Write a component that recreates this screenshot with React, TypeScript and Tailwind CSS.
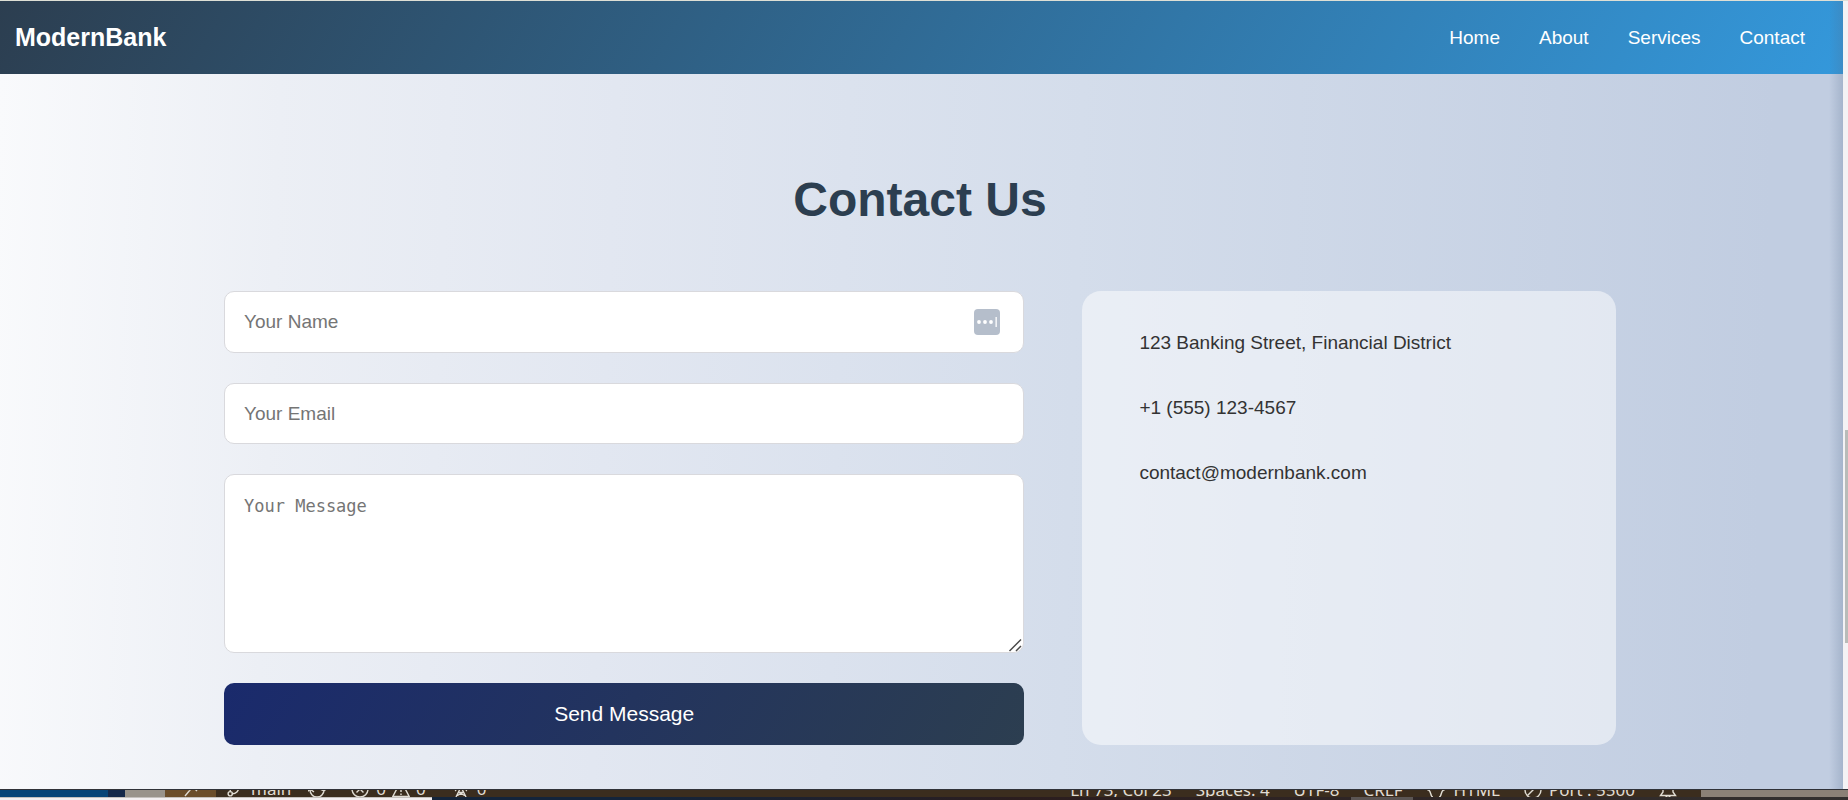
import type { ReactNode } from "react";
import { GitBranch } from "lucide-react";

const links = ["Home", "About", "Services", "Contact"];

function Header() {
  return (
    <header className="flex h-[73px] shrink-0 items-center justify-between bg-[linear-gradient(120deg,#2c3e50,#3498db)] pr-[38px] pl-[15px] text-white">
      <a href="#home" className="text-[25px] font-bold">ModernBank</a>
      <nav className="flex gap-[39px] pt-[2px] text-[19px]">
        {links.map((link) => (
          <a key={link} href={"#" + link.toLowerCase()}>{link}</a>
        ))}
      </nav>
    </header>
  );
}

const fieldClass =
  "block w-full rounded-[10px] border border-[#d9d9dd] bg-white px-[19px] text-[19px] text-[#333333] placeholder:text-[#757575] outline-none";

function ContactForm() {
  return (
    <form className="flex flex-col gap-[30px]" onSubmit={(e) => e.preventDefault()}>
      <div className="relative">
        <input aria-label="Your Name" type="text" placeholder="Your Name" className={fieldClass + " h-[62px]"} />
        <svg aria-hidden="true" viewBox="0 0 26 26" className="absolute top-[18px] right-[24px] size-[26px]">
          <rect width="26" height="26" rx="4" fill="#b5becb" />
          <circle cx="5" cy="13" r="1.9" fill="white" />
          <circle cx="11" cy="13" r="1.9" fill="white" />
          <circle cx="17" cy="13" r="1.9" fill="white" />
          <rect x="21.5" y="8" width="1.3" height="10" fill="white" />
        </svg>
      </div>
      <input aria-label="Your Email" type="email" placeholder="Your Email" className={fieldClass + " h-[61px]"} />
      <div className="relative">
        <textarea
          aria-label="Your Message"
          placeholder="Your Message"
          className="block h-[179px] w-full resize-none rounded-[10px] border border-[#d9d9dd] bg-white px-[19px] py-[19px] font-['DejaVu_Sans_Mono',monospace] text-[17px] text-[#333333] outline-none placeholder:text-[#757575]"
        />
        <svg aria-hidden="true" viewBox="0 0 14 14" fill="none" stroke="#4a4a4a" strokeWidth="1.5" className="absolute right-[2px] bottom-[1px] size-[14px]">
          <path d="M1.5 13 13 1.5M8 13l5-5" />
        </svg>
      </div>
      <button type="submit" className="h-[62px] rounded-[10px] bg-[linear-gradient(120deg,#1a2a6c,#2c3e50)] text-[21px] text-white">
        Send Message
      </button>
    </form>
  );
}

function StatusIcon({ children }: { children: ReactNode }) {
  return (
    <svg aria-hidden="true" viewBox="0 0 18 18" fill="none" stroke="currentColor" strokeWidth="1.4" className="size-[18px] shrink-0">
      {children}
    </svg>
  );
}

function StatusBar() {
  return (
    <footer className="h-[11px] shrink-0 overflow-hidden bg-[linear-gradient(90deg,#14243a_0%,#14243a_35%,#2b1d1e_55%,#33302f_100%)] font-['Noto_Sans',sans-serif] text-[17px] leading-[20px] text-[#e0dcd3]">
      <div className="flex h-[8px] items-end overflow-hidden border-t border-[#303238] bg-[#3b2d1e]">
        <div className="h-full w-[108px] shrink-0 bg-[#074477]" />
        <div className="h-full w-[17px] shrink-0 bg-[#15284a]" />
        <div className="h-full w-[40px] shrink-0 bg-[#99938b]" />
        <div className="flex h-full w-[51px] shrink-0 items-end justify-center bg-[#6b4d2a]">
          <StatusIcon>
            <path d="m3 6 5 5-5 6M15 2l-5 5 5 5" />
          </StatusIcon>
        </div>
        <div className="flex h-[16px] shrink-0 items-center pl-[10px]">
          <GitBranch size={17} />
          <span className="ml-[8px]">main</span>
          <span className="ml-[17px]">
            <StatusIcon>
              <path d="M2 8a7 7 0 0 1 14-1M16 10a7 7 0 0 1-14 0M-1 12l3-3 4 3M12 9l4 2 3-3" />
            </StatusIcon>
          </span>
          <span className="ml-[25px]">
            <StatusIcon>
              <circle cx="9" cy="9" r="8" />
              <path d="m5.5 5.5 7 7M12.5 5.5l-7 7" />
            </StatusIcon>
          </span>
          <span className="ml-[7px]">0</span>
          <span className="ml-[6px]">
            <StatusIcon>
              <path d="M9 1 17.2 16.5H.8ZM9 6v6M9 13.5V15" />
            </StatusIcon>
          </span>
          <span className="ml-[6px]">0</span>
          <span className="ml-[26px]">
            <StatusIcon>
              <path d="m9 7-5 10M9 7l5 10M6 12.5h6M5.5 15.5l5-3M12.5 15.5l-5-3M4 11a6 6 0 1 1 10 0" />
            </StatusIcon>
          </span>
          <span className="ml-[7px]">0</span>
        </div>
        <div className="ml-auto flex h-[15px] shrink-0 items-center gap-[24px] pr-[24px]">
          <span>Ln 73, Col 23</span>
          <span>Spaces: 4</span>
          <span>UTF-8</span>
          <span>CRLF</span>
          <span className="flex items-center gap-[9px]">
            <StatusIcon>
              <path d="M6 2C3 2 4.500 8 1.500 9 4.500 10 3 16 6 16M12 2c3 0 1.500 6 4.500 7-3 1-1.500 7-4.500 7" />
            </StatusIcon>
            HTML
          </span>
          <span className="flex items-center gap-[7px]">
            <StatusIcon>
              <circle cx="9" cy="9" r="8" />
              <path d="M14.500 3.500 3.500 14.500" />
            </StatusIcon>
            Port : 5500
          </span>
          <StatusIcon>
            <path d="M4 11V7a5 5 0 0 1 10 0v4l2.500 3.500h-15ZM7 14.500a2 2 0 0 0 4 0" />
          </StatusIcon>
        </div>
        <div className="h-full w-[147px] shrink-0 bg-[#8b8177]" />
      </div>
      <div className="flex">
        <div className="h-[3px] w-[432px] border-t border-[#c4c0bd] bg-[#f3eff1]" />
        <div className="ml-[919px] h-[3px] w-[62px] bg-[#5b5553]" />
      </div>
    </footer>
  );
}

export default function App() {
  return (
    <div className="flex min-h-screen flex-col font-['Liberation_Sans',Arial,sans-serif]">
      <div className="flex grow border-t border-[#dedfd5]">
        <div className="relative flex min-w-0 grow flex-col">
          <Header />
          <main className="grow bg-[linear-gradient(92deg,#f9fafc_0%,#eceff5_15%,#e2e7f1_33%,#d4ddeb_58%,#c1cde1_95%)] pt-[90px] pr-[19px] pb-[40px] pl-4">
            <h1 className="text-center text-[48px] leading-[72px] font-bold text-[#2c3e50]">Contact Us</h1>
            <div className="mx-auto mt-[55px] grid max-w-[1392px] grid-cols-[3fr_2fr] gap-[58px]">
              <ContactForm />
              <address className="flex flex-col gap-[36px] rounded-[19px] bg-white/50 px-[57px] pt-[37px] text-[19px] leading-[29px] text-[#333333] not-italic">
                <p>123 Banking Street, Financial District</p>
                <p>+1 (555) 123-4567</p>
                <p>contact@modernbank.com</p>
              </address>
            </div>
          </main>
          <div className="pointer-events-none absolute inset-y-0 right-0 w-[14px] bg-linear-to-r from-transparent to-[#526b8b]/25" />
        </div>
        <div className="flex w-[5px] shrink-0 flex-col items-end bg-[#f4f2f4] pt-[429px]">
          <div className="h-[213px] w-[3px] bg-[#b9bcb9]" />
        </div>
      </div>
      <StatusBar />
    </div>
  );
}
